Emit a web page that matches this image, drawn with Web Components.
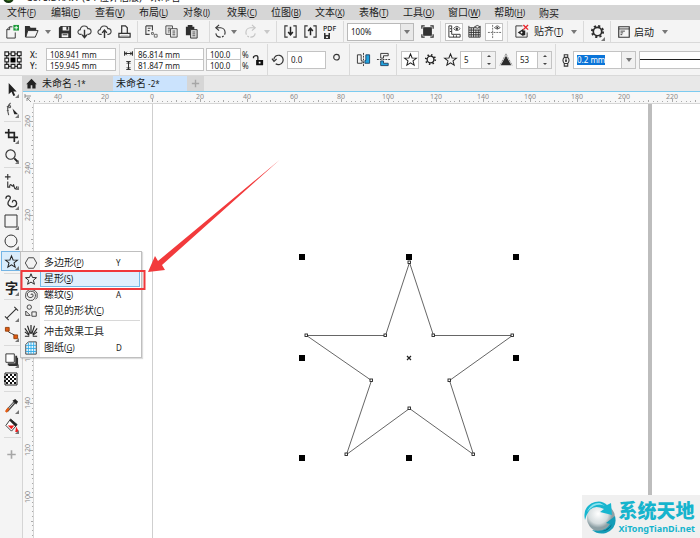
<!DOCTYPE html>
<html lang="zh-CN">
<head>
<meta charset="utf-8">
<title>未命名 -2*</title>
<style>
  html, body { margin: 0; height: 100%; }
  body { overflow: hidden; font: 10px/14px "Noto Sans", "Noto Sans CJK SC", sans-serif; color: #1c1c1c; background: #fff; }
</style>
</head>
<body>
<design-app></design-app>
<script>
const ICONS = {
  new: '<path d="M9 3H6L3 6v9h9V9M6 3v3H3" fill="none" stroke="#333"/><path d="M10 1h6v6h-6z" fill="#1d9a3a"/><path d="M13 2v4M11 4h4" stroke="#fff"/>',
  open: '<path d="M1 14V2h5l1 2h6v3H5L2 14z" fill="#2f2f2f"/><path d="M4 7h11l-3 7H2z" fill="#f4f4f4" stroke="#2f2f2f"/>',
  save: '<path d="M4 2h11v13H2V4z" fill="#2f2f2f"/><path d="M6 3h7v4H6zM5 10h7v4H5z" fill="#f4f4f4"/><path d="M10 3h2v3h-2zM6 11h5v1H6z" fill="#2f2f2f"/>',
  cloudDown: '<path d="M5 11H3.500a2.500 2.500 0 0 1 0-5C4 1 11 1 11.500 5a3 3 0 0 1 1 6H11" fill="none" stroke="#444" stroke-width="1.200"/><path d="M8 6v8M5.500 11.500L8 14.500l2.500-3" fill="none" stroke="#333" stroke-width="1.500"/>',
  cloudUp: '<path d="M5 11H3.500a2.500 2.500 0 0 1 0-5C4 1 11 1 11.500 5a3 3 0 0 1 1 6H11" fill="none" stroke="#444" stroke-width="1.200"/><path d="M8 15V7M5.500 9.500L8 6.500l2.500 3" fill="none" stroke="#333" stroke-width="1.500"/>',
  print: '<path d="M2 10h12v4H2zM5 10V2h4l2 2v6" fill="none" stroke="#333" stroke-width="1.300"/><path d="M4 12.500h8" stroke="#bbb"/>',
  cut: '<path d="M2 2h7v5M6 11H2V2M4 4.500h3M4 7h2" fill="none" stroke="#444" stroke-width="1.200"/><path d="M8 9h2v2H8zM11 11h3v3h-3z" fill="none" stroke="#666"/>',
  copy: '<path d="M2 2h7v9H2zM4 4.500h3M4 6.500h3M4 8.500h2" fill="none" stroke="#444"/><path d="M7 5h7v9H7z" fill="#f4f4f4" stroke="#444"/><path d="M9 7.500h3M9 9.500h3M9 11.500h3" stroke="#444"/>',
  paste: '<path d="M2 3h9v9H2zM4 1h5v3H4z" fill="#2f2f2f"/><path d="M7 6h7v9H7z" fill="#ddd" stroke="#333"/><path d="M9 8.500h3M9 10.500h3M9 12.500h3" stroke="#555"/>',
  undo: '<path d="M4 4h4a5 5 0 1 1-5 6" fill="none" stroke="#333" stroke-width="1.200" stroke-dasharray="14 1.500 2 1.500"/><path d="M6.500 1L3 4l3.500 3" fill="none" stroke="#333" stroke-width="1.200"/>',
  redo: '<path d="M12 4H8a5 5 0 1 0 5 6" fill="none" stroke="#c4c4c4" stroke-width="1.200" stroke-dasharray="14 1.500 2 1.500"/><path d="M9.500 1L13 4 9.500 7" fill="none" stroke="#c4c4c4" stroke-width="1.200"/>',
  import: '<path d="M5 2H2v12h3M11 2h3v12h-3" fill="none" stroke="#333" stroke-width="1.200"/><path d="M8 3v8M5.500 8.500L8 11.500l2.500-3" fill="none" stroke="#222" stroke-width="1.600"/>',
  export: '<path d="M5 2H2v12h3M11 2h3v12h-3" fill="none" stroke="#333" stroke-width="1.200"/><path d="M8 12V5M5.500 7.500L8 4.500l2.500 3" fill="none" stroke="#222" stroke-width="1.600"/>',
  pdf: '<text x="1" y="7" font-size="7" font-weight="500" fill="#222">PDF</text><path d="M2 9h6v6H2z" fill="#333"/><path d="M3.500 9h3v2h-3zM4 12.500h2v1.500H4z" fill="#eee"/>',
  full: '<path d="M4 4h8v8H4z" fill="#333"/><path d="M2 5V2h3M11 2h3v3M14 11v3h-3M5 14H2v-3M4 4h8v8H4z" fill="none" stroke="#333" stroke-width="1.300"/>',
  rulers: '<path d="M2 2h3v9h9v3H2zM3 5h2M3 8h2M7 12v2M10 12v2" fill="none" stroke="#333"/><path d="M7 5q3.500-5 7 0q-3.500 4-7 0z" fill="none" stroke="#555"/><circle cx="10.500" cy="5" r="1.300" fill="#333"/>',
  grid: '<path d="M2 2v12M4.500 4v10M7 4v10M9.500 6v8M12 6v8M14 2v12M2 4h12M2 6.500h12M2 9h12M2 11.500h12M2 14h12" stroke="#333" fill="none"/><path d="M8 3q3-3 6 0q-3 3-6 0z" fill="#eee" stroke="#444"/>',
  guides: '<path d="M6 1v14M1 9h14" stroke="#666" stroke-dasharray="2 1"/><path d="M8 4q3-4 6 0q-3 3-6 0z" fill="#fff" stroke="#555"/><circle cx="11" cy="4" r="1" fill="#333"/>',
  snap: '<path d="M2 2h7M2 2v12h12V9" fill="none" stroke="#333"/><path d="M4 9l6-4v2h2v5h-2v1z" fill="#222"/><circle cx="8" cy="9" r="1" fill="#fff"/><path d="M10 1l5 5M15 1l-5 5" stroke="#e8272d" stroke-width="1.500"/>',
  gear: '<circle cx="8" cy="8" r="4.500" fill="none" stroke="#2b2b2b" stroke-width="1.800"/><circle cx="8" cy="8" r="6" fill="none" stroke="#2b2b2b" stroke-width="2" stroke-dasharray="2.300 2.410"/>',
  gearThin: '<circle cx="8" cy="8" r="3.600" fill="none" stroke="#222" stroke-width="1.400"/><circle cx="8" cy="8" r="5" fill="none" stroke="#222" stroke-width="2" stroke-dasharray="1.500 2.427"/>',
  launch: '<path d="M2 2h12v12H2z" fill="none" stroke="#333" stroke-width="1.300"/><path d="M2 4.500h12M4 7h5M4 9h3M4 11h2" stroke="#333"/>',
  origin: '<path d="M3 3h10v10H3z" fill="none" stroke="#333"/><g fill="#f4f4f4" stroke="#222" stroke-width=".9"><path d="M1.500 1.500h3v3h-3zM6.500 1.500h3v3h-3zM11.500 1.500h3v3h-3zM1.500 6.500h3v3h-3zM11.500 6.500h3v3h-3zM1.500 11.500h3v3h-3zM6.500 11.500h3v3h-3zM11.500 11.500h3v3h-3z"/></g><path d="M6 6h4v4H6z" fill="#000"/>',
  width: '<path d="M1 4v8M15 4v8M2 8h12M5 5L2 8l3 3M11 5l3 3-3 3" fill="none" stroke="#222" stroke-width="1.700"/>',
  height: '<path d="M4 1h8M4 15h8M8 2v12M5 5l3-3 3 3M5 11l3 3 3-3" fill="none" stroke="#222" stroke-width="1.700"/>',
  lock: '<path d="M7 8h8v6H7z" fill="#111"/><path d="M9 8V4.500Q9 3 7 3T4 4.500V6" fill="none" stroke="#222" stroke-width="1.500"/><path d="M10 10h2v2h-2z" fill="#fff"/>',
  rotate: '<path d="M3 8a5 5 0 1 1 2 4.500" fill="none" stroke="#333" stroke-width="1.300"/><path d="M1 7l2.200 3L6 7.500" fill="none" stroke="#333" stroke-width="1.300"/>',
  degree: '<circle cx="8" cy="5.500" r="3" fill="none" stroke="#333" stroke-width="1.200"/>',
  mirrorH: '<path d="M1.500 3h4v6h1v3h-5z" fill="none" stroke="#333"/><path d="M14.500 3h-4v6h-1v3h5z" fill="#20a4e0" stroke="#246"/><path d="M8 1v14" stroke="#333" stroke-dasharray="2 1"/>',
  mirrorV: '<path d="M13 1.500H5v5h3V4h5z" fill="none" stroke="#333"/><path d="M13 14.500H5v-5h3V12h5z" fill="#20a4e0" stroke="#246"/><path d="M1 8h14" stroke="#333" stroke-dasharray="2 1"/>',
  star: '<path d="M8 2l1.700 4.300 4.600.2-3.600 3 1.200 4.500L8 11.500 4.100 14l1.200-4.500-3.600-3 4.600-.2z" fill="none" stroke="#222" stroke-width="1.100"/>',
  sharp: '<path d="M8 3l6 11H2z" fill="#2b2b2b"/><path d="M8 1L1 14M8 1l7 13" stroke="#555" stroke-dasharray="1 1"/>',
  pen: '<path d="M6 2h4v3H6zM6 5Q3 8 6 12h4q3-4 0-7M8 6v4M6 12v3h4v-3" fill="none" stroke="#333" stroke-width="1.200"/><circle cx="8" cy="9" r="1" fill="#222"/>',
  home: '<path d="M8 2L1.500 9H3v5h4v-4h2v4h4V9h1.500z" fill="#222"/>',
  plus: '<path d="M8 3.500v9M3.500 8h9" stroke="#a6a6a6" stroke-width="1.700"/>',
  pick: '<path d="M5 1v12l3-2.500 2 4.500 2-1-2-4h3.500z" fill="#222"/>',
  shape: '<path d="M7 1Q2 5 5 14M3 5l3-1M3 9h2" fill="none" stroke="#555" stroke-width="1.200"/><path d="M5 4h2v2H5z" fill="#fff" stroke="#444"/><path d="M9 7l6 6h-4z" fill="#222"/>',
  crop: '<path d="M5 1v9h10M1 5h10v10" fill="none" stroke="#222" stroke-width="1.800"/>',
  zoom: '<circle cx="7" cy="7" r="5" fill="none" stroke="#333" stroke-width="1.200"/><path d="M11 11l4 4" stroke="#222" stroke-width="2"/>',
  freehand: '<path d="M4 0v6M1 3h6M4 8v6h2q0-4 2-2t2 0 1 2 3-1" fill="none" stroke="#333" stroke-width="1.200"/>',
  curve: '<path d="M2 5q0-3 3-3 3 1 1 4-3 4-1 6 3 3 7 1 3-3 0-6-3-1-3 2" fill="none" stroke="#333" stroke-width="1.400"/>',
  rect: '<path d="M2 2h12v12H2z" fill="none" stroke="#333"/>',
  ellipse: '<circle cx="8" cy="8" r="6" fill="none" stroke="#333"/>',
  text: '<text x="1" y="14" font-size="14" font-weight="700" fill="#222">字</text>',
  dimension: '<path d="M3 13L13 3M1 11l4 4M11 1l4 4" fill="none" stroke="#333" stroke-width="1.200"/>',
  connector: '<path d="M4 4q0 3 4 4t4 4" fill="none" stroke="#333"/><path d="M1.500 1.500h4v4h-4zM10.500 9.500h4v4h-4z" fill="#e05a12" stroke="#94430f"/>',
  shadow: '<path d="M6 14h8V6h1v9H5v-1zM4 12h8V4h2v10H4z" fill="#333"/><path d="M2 2h9v9H2z" fill="#fff" stroke="#333"/>',
  checker: '<path d="M2 2h12v12H2z" fill="#fff" stroke="#222"/><path d="M3 4h11M3 8h11M3 12h11" stroke="#111" stroke-width="2" stroke-dasharray="2 2"/><path d="M1 6h12M1 10h12" stroke="#111" stroke-width="2" stroke-dasharray="2 2"/>',
  dropper: '<path d="M3 14l8-9" stroke="#444" stroke-width="3"/><path d="M4.500 12l6-7" stroke="#ddd"/><path d="M2 15l3-4" stroke="#e65c12" stroke-width="2.500"/><path d="M9 3l4 4 2-3-3-3z" fill="#222"/>',
  fill: '<path d="M7 1l7 6-6 7-6-6z" fill="#fff" stroke="#333"/><path d="M7 1l7 6-2 2-6-6z" fill="#222"/><path d="M4 8h7l-3 4z" fill="#f01c1c"/><path d="M13 9l3 6h-4z" fill="#f01c1c"/>',
  polygon: '<path d="M5 2h6l3.500 6L11 14H5L1.500 8z" fill="none" stroke="#333"/>',
  spiral: '<path d="M8 8q0-2 2-1 2 3-2 4-5 0-4-5 3-4 8-1 3 5-2 9-6 1-8-3-1-7 4-9 6-1 9 4v5l-2 2" fill="none" stroke="#333"/>',
  shapes: '<circle cx="6" cy="3.500" r="2.500" fill="none" stroke="#333"/><path d="M2 8v5h5zM9 9h5v5H9z" fill="none" stroke="#333"/>',
  impact: '<path d="M8 11V1M7 11L4 2M9 11l3-9M6 12L1 5M10 12l5-7M6 13L1 9M10 13l5-4M6 14H1M10 14h5" stroke="#222" stroke-width="1.300"/>',
  table: '<path d="M5 1h9v14H2V4z" fill="#eaf8ff" stroke="#333"/><path d="M5 2v13M8 1v14M11 1v14M2 5h12M2 8.500h12M2 12h12" stroke="#2ba8e6"/>'
};

const define = (name, css, html, setup) => {
  const template = document.createElement('template');
  customElements.define(name, class extends HTMLElement {
    connectedCallback() {
      if (this.shadowRoot) return;
      template.innerHTML = `<style>*{box-sizing:border-box}${css}</style>${typeof html === 'function' ? html(this) : html}`;
      this.attachShadow({ mode: 'open' }).append(template.content.cloneNode(true));
      if (setup) setup(this);
    }
  });
};
const attr = (el, name, fallback = '') => el.getAttribute(name) ?? fallback;

define('ui-icon', ':host{display:inline-flex;flex:none}svg{display:block;overflow:visible;font-family:inherit}',
  el => `<svg width="${attr(el, 'size', 15)}" height="${attr(el, 'size', 15)}" viewBox="0 0 16 16" aria-hidden="true">${ICONS[attr(el, 'name')]}</svg>`);

define('ui-sep', ':host{display:block;flex:none;align-self:stretch;width:1px;margin:0 3px;background:#dadada}:host([flat]){width:auto;height:1px;margin:2px 1px 3px 3px}', '');

define('tool-button', `
  :host{display:flex;flex:none;width:20px;height:20px;position:relative}
  :host([narrow]){width:14px}
  button{all:unset;box-sizing:border-box;display:flex;align-items:center;justify-content:center;gap:3px;width:100%;height:100%;white-space:nowrap}
  :host([boxed]){width:18px;height:18px;margin:0 1px}
  :host([boxed]) button{background:#fff;border:1px solid #c4c4c4}
  :host([active]) button{background:#d9ecfb;border:1px solid #74b4e4}
  :host([fly])::after{content:"";position:absolute;right:2px;bottom:1px;border:solid transparent;border-width:0 0 4px 4px;border-bottom-color:#777}`,
  el => `<button type="button" aria-label="${attr(el, 'label')}"><ui-icon name="${attr(el, 'icon')}" size="${attr(el, 'size', 15)}"></ui-icon><slot></slot></button>`);

define('drop-arrow', `
  :host{display:flex;flex:none;width:13px;height:18px}
  button{all:unset;display:flex;width:100%;align-items:center;justify-content:center}
  button::before{content:"";border:solid transparent;border-width:4px 3px 0;border-top-color:var(--arrow,#777)}`,
  '<button type="button" aria-label="展开"></button>');

define('menu-item', `
  :host{display:block;flex:none;min-width:30px}
  :host([plain]){min-width:0}
  button{all:unset;white-space:nowrap}
  small{font-size:8px}`,
  el => `<button type="button"><slot></slot>${el.hasAttribute('key') ? `<small>(<u>${attr(el, 'key')}</u>)</small>` : ''}</button>`);

define('menu-bar', ':host{display:flex;align-items:center;gap:14px;height:15px;padding:0 7px;background:#d6d6d6}', '<slot></slot>');

define('tool-bar', ':host{display:flex;align-items:center;background:#f4f4f4;border-bottom:1px solid #d9d9d9;height:23px;padding:1px 1px 0;overflow:hidden}:host([tall]){height:33px}', '<slot></slot>');

define('value-field', `
  :host{display:flex;flex:none;width:70px;height:12px}
  :host([short]){width:35px}
  :host([mid]){width:39px;height:18px}
  :host([spin]){width:36px;height:18px}
  :host([combo]){width:63px;height:18px}
  input{min-width:0;flex:1;width:100%;height:100%;margin:0;padding:0 0 0 3px;border:1px solid #c3c3c3;border-radius:0;background:#fff;font:inherit;font-size:8px;line-height:10px;color:#222;outline:0}
  :host([combo]) input{color:#fff;padding:3px 0 3px 3px;background:linear-gradient(#0a74d8,#0a74d8) 0 0/28px 100% no-repeat content-box,#fff}
  .side{display:none;flex-direction:column;flex:none;width:14px;border:1px solid #c3c3c3;border-left:0;background:#f1f1f1}
  :host([spin]) .side,:host([combo]) .side{display:flex}
  button{all:unset;flex:1;display:flex;align-items:center;justify-content:center}
  button::before{content:"";border:solid transparent;border-width:0 2px 2px;border-bottom-color:#444}
  button:last-child::before{border-width:2px 2px 0;border-top-color:#444}
  :host([combo]) button:first-child{display:none}
  :host([combo]) button:last-child::before{border-width:4px 3px 0;border-top-color:#777}`,
  el => `<input type="text" aria-label="${attr(el, 'label')}" value="${attr(el, 'value')}"><span class="side"><button type="button" aria-label="增加"></button><button type="button" aria-label="减少"></button></span>`);

define('zoom-select', `
  :host{display:block;flex:none;position:relative;width:67px;height:18px;font-size:8px}
  select{appearance:none;width:100%;height:100%;border:1px solid #b9b9b9;border-radius:0;padding:0 16px 0 3px;font:inherit;color:#222;background:linear-gradient(90deg,#c3c3c3 1px,#e9e9e9 1px) right/13px 100% no-repeat #fff}
  :host::after{content:"";position:absolute;right:4px;top:7px;border:solid transparent;border-width:4px 3px 0;border-top-color:#777;pointer-events:none}`,
  '<select aria-label="缩放级别"><option>100%</option></select>');

define('title-strip', `
  :host{display:flex;align-items:flex-end;height:5px;overflow:hidden;background:#fff;padding-left:3px;gap:12px;white-space:nowrap}
  svg{flex:none}span{margin-bottom:1px}`,
  '<svg width="11" height="11" viewBox="0 0 11 11"><circle cx="5.500" cy="3.500" r="5.500" fill="#173a12"/><circle cx="5.500" cy="3" r="3.500" fill="#69b52c"/></svg><span>CorelDRAW (64 位评估版) - 未命名</span>');

define('property-bar', `
  :host{display:block}
  .stack{display:flex;flex-direction:column;flex:none}
  .stack>value-field+value-field{margin-top:-1px}
  .labels{font-size:8px;line-height:11px;width:16px;margin:0 0 0 7px}
  .labels b{font-weight:500}
  .dims{width:10px;align-items:center;gap:3px;margin-right:1px}
  .pct{font-size:8px;line-height:11px;width:9px;padding-left:1px}
  .gap{margin-left:2px}
  .line{flex:1;min-width:20px;height:18px;background:linear-gradient(#222,#222) center/100% 1px no-repeat #fff;border:1px solid #c3c3c3;border-right:0;margin:0 -1px 0 3px}`, `
  <tool-bar tall>
    <tool-button class="gap" icon="origin" size="20" label="对象原点"></tool-button>
    <div class="stack labels"><b>X:</b><b>Y:</b></div>
    <div class="stack"><value-field label="X" value="108.941 mm"></value-field><value-field label="Y" value="159.945 mm"></value-field></div>
    <ui-sep></ui-sep>
    <div class="stack dims"><ui-icon name="width" size="9"></ui-icon><ui-icon name="height" size="9"></ui-icon></div>
    <div class="stack"><value-field label="宽度" value="86.814 mm"></value-field><value-field label="高度" value="81.847 mm"></value-field></div>
    <div class="stack gap"><value-field short label="水平缩放" value="100.0"></value-field><value-field short label="垂直缩放" value="100.0"></value-field></div>
    <div class="stack pct"><span>%</span><span>%</span></div>
    <tool-button narrow icon="lock" size="14" label="锁定比率"></tool-button>
    <ui-sep></ui-sep>
    <tool-button narrow icon="rotate" label="旋转角度"></tool-button>
    <value-field mid class="gap" label="角度" value="0.0"></value-field>
    <tool-button icon="degree" label="度"></tool-button>
    <ui-sep></ui-sep>
    <tool-button icon="mirrorH" label="水平镜像"></tool-button>
    <tool-button icon="mirrorV" label="垂直镜像"></tool-button>
    <ui-sep></ui-sep>
    <tool-button boxed icon="star" label="星形"></tool-button>
    <tool-button icon="gearThin" label="复杂星形"></tool-button>
    <tool-button icon="star" label="点数或边数"></tool-button>
    <value-field spin label="点数" value="5"></value-field>
    <tool-button icon="sharp" size="14" label="锐度"></tool-button>
    <value-field spin label="锐度" value="53"></value-field>
    <ui-sep></ui-sep>
    <tool-button narrow icon="pen" size="14" label="轮廓宽度"></tool-button>
    <value-field combo label="轮廓宽度" value="0.2 mm"></value-field>
    <div class="line"></div>
  </tool-bar>`);

define('doc-tabs', `
  :host{display:flex;height:16px;background:#e8e8e8;border-bottom:1px solid #7ccbf0;line-height:15px}
  button{all:unset;box-sizing:border-box;display:flex;align-items:center;height:15px;background:#d6d6d6;white-space:pre}
  .home{width:16px;justify-content:center}
  .tab{width:74px;padding-left:3px}
  .tab[aria-selected=true]{background:#cbe3fd}
  .add{width:17px;justify-content:center}
  small{font-size:8px}`, `
  <button type="button" class="home" aria-label="主页"><ui-icon name="home" size="13"></ui-icon></button>
  <button type="button" class="tab" role="tab">未命名<small> -1*</small></button>
  <button type="button" class="tab" role="tab" aria-selected="true">未命名<small> -2*</small></button>
  <button type="button" class="add" aria-label="新建"><ui-icon name="plus" size="13"></ui-icon></button>`);

/* Ruler: "origin" is the offset of the first labelled tick; further labels follow at an even pitch. */
define('scale-ruler', ':host{display:block;overflow:hidden;background:#f7f7f7;min-width:0;min-height:0}svg{display:block;width:100%;height:100%}text{font-size:7px;fill:#8a8a8a;text-anchor:middle}',
  el => {
    const vertical = el.hasAttribute('vertical');
    const origin = +attr(el, 'origin'), pitch = vertical ? 47 : 47.2;
    let out = '';
    for (let i = -10; i < 300; i++) {
      const p = Math.round(origin + i * pitch / 10), len = i % 10 === 0 ? 3 : i % 5 === 0 ? 2 : 1;
      out += vertical ? `<path d="M${10 - len} ${p}.500h${len}"/>` : `<path d="M${p}.500 ${10 - len}v${len}"/>`;
    }
    const texts = attr(el, 'labels').split(' ').map((t, i) => {
      const p = Math.round(origin + i * pitch);
      return vertical ? `<text transform="translate(7 ${p}) rotate(-90)">${t}</text>` : `<text x="${p}" y="7">${t}</text>`;
    }).join('');
    return `<svg><g stroke="#aaa">${out}</g>${texts}</svg>`;
  });

define('ruler-corner', ':host{display:flex;align-items:center;justify-content:center;background:#f7f7f7}',
  '<svg width="8" height="8" viewBox="0 0 8 8" fill="none" stroke="#777"><path d="M1 0v4M1 2h6M3 4l4 4M3 7V4h3" stroke-width=".8"/></svg>');

/* Free drawing canvas holding the page frame and the selected star. */
define('draw-canvas', ':host{display:block;background:#fff;overflow:hidden;min-width:0;min-height:0;border:solid #d5d5d5;border-width:1px 0 0 1px}svg{display:block;width:100%;height:100%}',
  () => {
    const nodes = [[409,262],[433,335],[512,335],[449,380],[473,454],[409,408],[346,454],[371,380],[306,335],[385,335]];
    const handles = [302, 409, 516].flatMap(x => [257, 358, 458].map(y => [x, y])).filter(([x, y]) => !(x === 409 && y === 358));
    return `<svg><g transform="translate(-34 -104)">
      <path d="M152.500 103v3000" stroke="#cfcfcf"/><path d="M650 104v3000" stroke="#bdbdbd" stroke-width="4"/>
      <polygon points="${nodes.map(n => n.map(v => v + .5)).join(' ')}" fill="none" stroke="#555" stroke-width=".9"/>
      ${nodes.map(([x, y]) => `<rect x="${x - 1}" y="${y - 1}" width="2.500" height="2.500" fill="#fff" stroke="#222" stroke-width=".9"/>`).join('')}
      ${handles.map(([x, y]) => `<rect x="${x - 3}" y="${y - 3}" width="6" height="6"/>`).join('')}
      <path d="M407 356l4 4M411 356l-4 4" stroke="#222" stroke-width="1.200"/></g></svg>`;
  });

define('flyout-item', `
  :host{display:block}
  button{all:unset;box-sizing:border-box;display:grid;grid-template-columns:18px 1fr 24px;align-items:center;width:100%;height:16px;white-space:nowrap}
  ui-icon{justify-self:center}
  .label{padding-left:3px;height:100%;line-height:14px;border:1px solid transparent;margin-right:-24px}
  small,kbd{font:inherit;font-size:8px}
  :host([selected]) .label{background:#e0effd;border-color:#74b9e6}`,
  el => `<button type="button" role="menuitem"><ui-icon name="${attr(el, 'icon')}" size="14"></ui-icon><span class="label"><slot></slot>${el.hasAttribute('key') ? `<small>(<u>${attr(el, 'key')}</u>)</small>` : ''}</span><kbd>${attr(el, 'shortcut')}</kbd></button>`);

define('shape-flyout', `
  :host{display:block;position:absolute;z-index:2;left:19px;top:0;width:122px;padding:2px 1px;background:linear-gradient(90deg,#f1f1f1 19px,#fff 19px);border:1px solid #bfbfbf;box-shadow:1px 1px 1px #0002}
  hr{border:0;border-top:1px solid #d8d8d8;margin:2px 0 2px 22px}`, `
  <flyout-item icon="polygon" key="P" shortcut="Y">多边形</flyout-item>
  <flyout-item icon="star" key="S" selected>星形</flyout-item>
  <flyout-item icon="spiral" key="S" shortcut="A">螺纹</flyout-item>
  <flyout-item icon="shapes" key="C">常见的形状</flyout-item>
  <hr>
  <flyout-item icon="impact">冲击效果工具</flyout-item>
  <flyout-item icon="table" key="G" shortcut="D">图纸</flyout-item>`);

define('tool-box', `
  :host{display:flex;flex-direction:column;align-items:stretch;background:#f4f4f4;border-right:1px solid #d5d5d5;padding:3px 0 0 1px}
  .anchor{position:relative}
  .more{height:26px}`, `
  <tool-button fly icon="pick" label="选择"></tool-button>
  <tool-button fly icon="shape" label="形状"></tool-button>
  <ui-sep flat></ui-sep>
  <tool-button fly icon="crop" label="裁剪"></tool-button>
  <tool-button fly icon="zoom" label="缩放"></tool-button>
  <ui-sep flat></ui-sep>
  <tool-button fly icon="freehand" label="手绘"></tool-button>
  <tool-button fly icon="curve" label="艺术笔"></tool-button>
  <tool-button fly icon="rect" size="16" label="矩形"></tool-button>
  <tool-button fly icon="ellipse" size="16" label="椭圆形"></tool-button>
  <div class="anchor"><tool-button fly active icon="star" label="星形"></tool-button><shape-flyout></shape-flyout></div>
  <ui-sep flat></ui-sep>
  <tool-button fly icon="text" label="文本"></tool-button>
  <ui-sep flat></ui-sep>
  <tool-button fly icon="dimension" label="平行度量"></tool-button>
  <tool-button fly icon="connector" label="连接器"></tool-button>
  <ui-sep flat></ui-sep>
  <tool-button fly icon="shadow" label="阴影"></tool-button>
  <tool-button icon="checker" size="16" label="透明度"></tool-button>
  <ui-sep flat></ui-sep>
  <tool-button fly icon="dropper" label="颜色滴管"></tool-button>
  <tool-button fly icon="fill" label="交互式填充"></tool-button>
  <ui-sep flat></ui-sep>
  <tool-button class="more" icon="plus" label="自定义"></tool-button>`);

define('site-mark', `
  :host{position:absolute;right:0;bottom:0;display:flex;align-items:center;gap:1px;padding:3px 5px 2px 1px;background:#f0f0f0;color:#16b4cd}
  svg{flex:none}
  strong{display:block;font:900 19px/24px "Noto Sans CJK SC",sans-serif}
  span{display:block;font:bold 9px/14px "Noto Sans",sans-serif}`, `
  <svg width="34" height="36" viewBox="0 0 34 36"><defs><radialGradient id="ball" cx=".4" cy=".35"><stop offset="0" stop-color="#fff"/><stop offset=".7" stop-color="#d5dcde"/><stop offset="1" stop-color="#8da0a5"/></radialGradient></defs>
    <circle cx="18" cy="19" r="14" fill="url(#ball)"/>
    <path d="M2 21Q-1 7 12 3q7-2 12 3l4-2 1 12-12-3 4-3Q11 5 6 12q-3 4-4 9z" fill="#18b6cf"/><path d="M4 13Q8 3 17 4l5 3Q12 3 4 13z" fill="#8be3ee"/>
    <path d="M32 17q3 12-9 17-8 2-14-3 13 3 18-6l-4-1z" fill="#149db8"/><path d="M12 32q11 2 17-7-3 9-17 7z" fill="#095e73"/></svg>
  <div><strong>系统天地</strong><span>XiTongTianDi.net</span></div>`);

/* Callout arrow and frame drawn over the flyout. */
define('callout-mark', ':host{position:absolute;inset:0;z-index:3;pointer-events:none}svg{display:block;width:100%;height:100%}', `
  <svg><rect x="21.500" y="271" width="123" height="18" fill="none" stroke="#f0383b" stroke-width="2"/>
  <path d="M279.500 160L162 265l3 5-17 2 7-16 3 5z" fill="#f23a3c"/></svg>`);

define('design-app', `
  :host{display:grid;position:relative;height:100vh;grid-template-rows:auto auto auto auto 1fr;grid-template-columns:minmax(0,1fr);overflow:hidden}
  .body{display:grid;grid-template-columns:23px minmax(0,1fr);min-height:0}
  .work{display:grid;grid-template:16px 11px minmax(0,1fr)/10px minmax(0,1fr);min-height:0}
  doc-tabs{grid-column:1/-1}
  .lead{margin-left:3px}
  .gap{margin-left:4px}
  .wide{margin-left:8px}`, `
  <title-strip></title-strip>
  <menu-bar>
    <menu-item key="F">文件</menu-item><menu-item key="E">编辑</menu-item><menu-item key="V">查看</menu-item><menu-item key="L">布局</menu-item><menu-item key="J">对象</menu-item><menu-item key="C">效果</menu-item><menu-item key="B">位图</menu-item><menu-item key="X">文本</menu-item><menu-item key="T">表格</menu-item><menu-item key="O">工具</menu-item><menu-item key="W">窗口</menu-item><menu-item key="H">帮助</menu-item><menu-item>购买</menu-item>
  </menu-bar>
  <tool-bar>
    <tool-button icon="new" label="新建"></tool-button><tool-button icon="open" label="打开"></tool-button><drop-arrow></drop-arrow>
    <tool-button icon="save" label="保存"></tool-button><tool-button icon="cloudDown" label="从云打开"></tool-button><tool-button icon="cloudUp" label="保存到云"></tool-button><tool-button icon="print" label="打印"></tool-button>
    <ui-sep></ui-sep>
    <tool-button icon="cut" label="剪切"></tool-button><tool-button icon="copy" label="复制"></tool-button><tool-button icon="paste" label="粘贴"></tool-button>
    <ui-sep class="wide"></ui-sep>
    <tool-button narrow icon="undo" label="撤消"></tool-button><drop-arrow></drop-arrow>
    <tool-button icon="redo" label="重做"></tool-button><drop-arrow style="--arrow:#c8c8c8"></drop-arrow>
    <ui-sep></ui-sep>
    <tool-button icon="import" label="导入"></tool-button><tool-button icon="export" label="导出"></tool-button><tool-button icon="pdf" size="16" label="发布为 PDF"></tool-button>
    <ui-sep></ui-sep>
    <zoom-select></zoom-select>
    <tool-button class="lead" icon="full" label="全屏预览"></tool-button>
    <ui-sep></ui-sep>
    <tool-button boxed icon="rulers" label="显示标尺"></tool-button><tool-button icon="grid" label="显示网格"></tool-button><tool-button boxed icon="guides" label="显示辅助线"></tool-button>
    <ui-sep></ui-sep>
    <tool-button icon="snap" label="贴齐关闭"></tool-button>
    <menu-item class="lead" key="T">贴齐</menu-item><drop-arrow class="lead"></drop-arrow>
    <ui-sep></ui-sep>
    <tool-button fly icon="gear" label="选项"></tool-button>
    <ui-sep></ui-sep>
    <tool-button icon="launch" size="14" label="应用程序启动器"></tool-button>
    <menu-item plain>启动</menu-item><drop-arrow class="gap"></drop-arrow>
  </tool-bar>
  <property-bar></property-bar>
  <div class="body">
    <tool-box></tool-box>
    <div class="work">
      <doc-tabs></doc-tabs>
      <ruler-corner></ruler-corner>
      <scale-ruler origin="25" labels="40 20 0 20 40 60 80 100 120 140 160 180 200 220"></scale-ruler>
      <scale-ruler vertical origin="18" labels="260 240 220 200 180 160 140 120 100"></scale-ruler>
      <draw-canvas></draw-canvas>
    </div>
  </div>
  <callout-mark></callout-mark>
  <site-mark></site-mark>`);
</script>
</body>
</html>
